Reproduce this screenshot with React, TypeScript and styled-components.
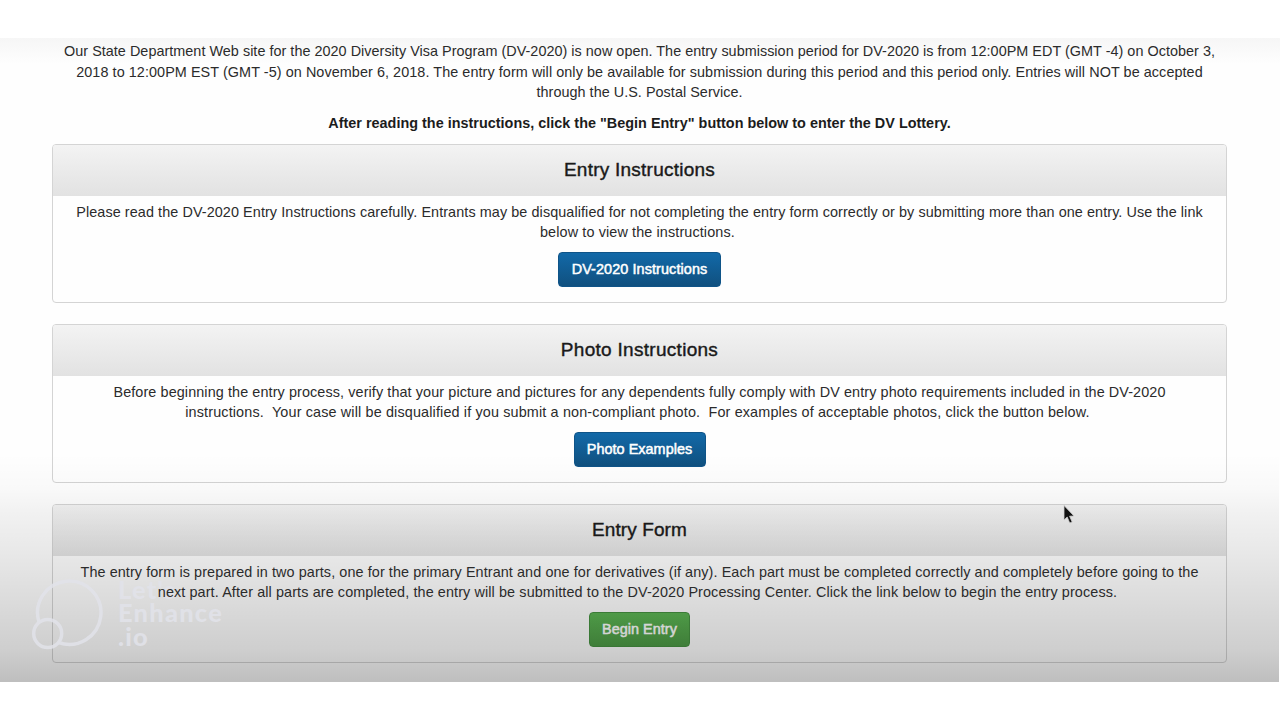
import React from "react";
import styled, { createGlobalStyle } from "styled-components";

const GlobalStyle = createGlobalStyle`
  body {
    margin: 0;
    background: #fff;
    overflow: hidden;
  }
`;

const Page = styled.div`
  box-sizing: border-box;
  width: 1280px;
  height: 720px;
  padding: 38px 0;
  background: #fff;
  font-family: "Liberation Sans", Arial, sans-serif;
  font-size: 14.4px;
  line-height: 20.6px;
  color: #2b2b2b;
`;

const Stage = styled.div`
  position: relative;
  box-sizing: border-box;
  height: 644px;
  padding: 3px 53px 0 52px;
  background: linear-gradient(#f6f6f6, #fefefe 26px, #fefefe);
`;

const Shade = styled.div`
  position: absolute;
  inset: 0 1px 0 0;
  pointer-events: none;
  background: linear-gradient(
    rgba(0, 0, 0, 0) 415px,
    rgba(0, 0, 0, 0.02) 450px,
    rgba(0, 0, 0, 0.05) 475px,
    rgba(0, 0, 0, 0.09) 518px,
    rgba(0, 0, 0, 0.19) 612px,
    rgba(0, 0, 0, 0.25) 644px
  );
`;

const Intro = styled.div`
  text-align: center;
`;

const Line = styled.div<{ $spacing: number; $bold?: boolean }>`
  position: relative;
  z-index: 1;
  white-space: pre;
  text-align: center;
  letter-spacing: ${({ $spacing }) => $spacing}px;
  font-weight: ${({ $bold }) => ($bold ? 700 : 400)};
`;

const Notice = styled.div`
  margin: 10.4px 0 9.8px;
  color: #1c1c1c;
`;

const Panel = styled.section`
  box-sizing: border-box;
  height: 159px;
  margin-bottom: 21px;
  border: 1px solid #d4d4d4;
  border-radius: 4px;
  background: #fefefe;
`;

const PanelHeading = styled.h3<{ $spacing: number }>`
  display: flex;
  align-items: center;
  justify-content: center;
  height: 51px;
  margin: 0;
  border-radius: 3px 3px 0 0;
  background: linear-gradient(#f3f3f3, #e2e2e2);
  font-size: 19px;
  font-weight: 400;
  letter-spacing: ${({ $spacing }) => $spacing}px;
  color: #1a1a1a;
  -webkit-text-stroke: 0.4px #1a1a1a;
`;

const PanelBody = styled.div`
  display: flex;
  flex-direction: column;
  align-items: center;
  padding-top: 6px;
`;

const Button = styled.button<{ $green?: boolean; $width: number; $spacing: number }>`
  width: ${({ $width }) => $width}px;
  height: 35px;
  margin: 9px 0 0;
  padding: 1px 0 0;
  border: 1px solid ${({ $green }) => ($green ? "#459140" : "#0f5488")};
  border-radius: 4px;
  background: ${({ $green }) =>
    $green
      ? "linear-gradient(#5cb553, #4d9a46)"
      : "linear-gradient(#1269a8, #10507f)"};
  color: #fff;
  font: inherit;
  letter-spacing: ${({ $spacing }) => $spacing}px;
  -webkit-text-stroke: 0.5px #fff;
`;

const Watermark = styled.div`
  position: absolute;
  left: 31px;
  top: 539px;
  display: flex;
  gap: 14px;
  color: #e2e3ea;
  opacity: 0.85;
  pointer-events: none;
`;

const WatermarkText = styled.div`
  padding-top: 1px;
  font-family: Lato, sans-serif;
  font-size: 25.5px;
  font-weight: 900;
  line-height: 23.4px;
  letter-spacing: 1.2px;
`;

const Pointer = styled.svg`
  position: absolute;
  left: 1061px;
  top: 467px;
`;

interface TextLine {
  text: string;
  spacing: number;
}

interface PanelData {
  title: string;
  titleSpacing: number;
  lines: TextLine[];
  button: string;
  buttonWidth: number;
  buttonSpacing: number;
  green?: boolean;
}

const intro: TextLine[] = [
  {
    text: "Our State Department Web site for the 2020 Diversity Visa Program (DV-2020) is now open. The entry submission period for DV-2020 is from 12:00PM EDT (GMT -4) on October 3,",
    spacing: 0.031,
  },
  {
    text: "2018 to 12:00PM EST (GMT -5) on November 6, 2018. The entry form will only be available for submission during this period and this period only. Entries will NOT be accepted",
    spacing: 0.07,
  },
  { text: "through the U.S. Postal Service.", spacing: 0.04 },
];

// the last line of each panel text keeps its trailing space
const panels: PanelData[] = [
  {
    title: "Entry Instructions",
    titleSpacing: 0.24,
    lines: [
      {
        text: "Please read the DV-2020 Entry Instructions carefully. Entrants may be disqualified for not completing the entry form correctly or by submitting more than one entry. Use the link",
        spacing: 0.086,
      },
      { text: "below to view the instructions. ", spacing: 0.12 },
    ],
    button: "DV-2020 Instructions",
    buttonWidth: 163,
    buttonSpacing: 0.1,
  },
  {
    title: "Photo Instructions",
    titleSpacing: 0.29,
    lines: [
      {
        text: "Before beginning the entry process, verify that your picture and pictures for any dependents fully comply with DV entry photo requirements included in the DV-2020",
        spacing: 0.1,
      },
      {
        text: "instructions.  Your case will be disqualified if you submit a non-compliant photo.  For examples of acceptable photos, click the button below. ",
        spacing: 0.144,
      },
    ],
    button: "Photo Examples",
    buttonWidth: 132,
    buttonSpacing: 0.05,
  },
  {
    title: "Entry Form",
    titleSpacing: 0.1,
    lines: [
      {
        text: "The entry form is prepared in two parts, one for the primary Entrant and one for derivatives (if any). Each part must be completed correctly and completely before going to the",
        spacing: 0.09,
      },
      {
        text: "next part. After all parts are completed, the entry will be submitted to the DV-2020 Processing Center. Click the link below to begin the entry process. ",
        spacing: 0.107,
      },
    ],
    button: "Begin Entry",
    buttonWidth: 101,
    buttonSpacing: 0.05,
    green: true,
  },
];

function EntryPanel(props: PanelData) {
  return (
    <Panel>
      <PanelHeading $spacing={props.titleSpacing}>{props.title}</PanelHeading>
      <PanelBody>
        {props.lines.map((line) => (
          <Line key={line.text} $spacing={line.spacing}>
            {line.text}
          </Line>
        ))}
        <Button
          $green={props.green}
          $width={props.buttonWidth}
          $spacing={props.buttonSpacing}>
          {props.button}
        </Button>
      </PanelBody>
    </Panel>
  );
}

export default function App() {
  return (
    <Page>
      <GlobalStyle />
      <Stage>
        <Intro>
          {intro.map((line) => (
            <Line key={line.text} $spacing={line.spacing}>
              {line.text}
            </Line>
          ))}
          <Notice>
            <Line $bold $spacing={0.015}>
              After reading the instructions, click the "Begin Entry" button
              below to enter the DV Lottery.
            </Line>
          </Notice>
        </Intro>
        {panels.map((panel) => (
          <EntryPanel key={panel.title} {...panel} />
        ))}
        <Shade />
        <Watermark>
          <svg width="73" height="74" viewBox="0 0 73 74" fill="none">
            <path
              d="M8.3 46 A31.7 31.7 0 1 1 27.5 65.5"
              stroke="currentColor"
              strokeWidth="3.5"
            />
            <circle
              cx="16.7"
              cy="56.5"
              r="14"
              stroke="currentColor"
              strokeWidth="3.5"
            />
          </svg>
          <WatermarkText>
            Let's
            <br />
            Enhance
            <br />
            .io
          </WatermarkText>
        </Watermark>
        <Pointer width="16" height="22" viewBox="0 0 16 22">
          <path
            d="M3 0.5 L3 15 L6.2 12 L8.7 18 L11.2 17 L8.6 11.2 L13 11 Z"
            fill="#111"
            stroke="#d0d0d0"
            strokeWidth="0.8"
          />
        </Pointer>
      </Stage>
    </Page>
  );
}
